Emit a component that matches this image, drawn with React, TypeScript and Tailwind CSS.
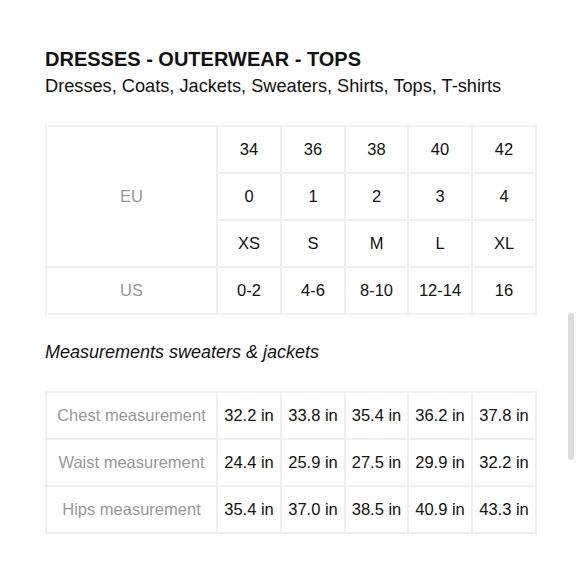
import React from 'react';

const sizes = [
  ['34', '36', '38', '40', '42'],
  ['0', '1', '2', '3', '4'],
  ['XS', 'S', 'M', 'L', 'XL'],
];
const us = ['0-2', '4-6', '8-10', '12-14', '16'];

const measurements: [string, string[]][] = [
  ['Chest measurement', ['32.2 in', '33.8 in', '35.4 in', '36.2 in', '37.8 in']],
  ['Waist measurement', ['24.4 in', '25.9 in', '27.5 in', '29.9 in', '32.2 in']],
  ['Hips measurement', ['35.4 in', '37.0 in', '38.5 in', '40.9 in', '43.3 in']],
];

const cell = 'border-2 border-[#efefef] h-[47px] p-0 text-center align-middle';

const Cols = () => (
  <colgroup>
    <col className="w-[171px]" />
    <col className="w-[64px]" />
    <col className="w-[64px]" />
    <col className="w-[63px]" />
    <col className="w-[64px]" />
    <col className="w-[64px]" />
  </colgroup>
);

export default function App() {
  return (
    <div className="relative w-[580px] h-[580px] bg-white text-[#111] overflow-hidden" style={{ fontFamily: '"Liberation Sans", Arial, sans-serif' }}>
      <div className="pl-[45px] pt-[47px]">
        <h1 className="text-[20px] font-bold leading-[24px]">DRESSES - OUTERWEAR - TOPS</h1>
        <p className="text-[18.2px] leading-[22px] mt-[4px]">Dresses, Coats, Jackets, Sweaters, Shirts, Tops, T-shirts</p>

        <table className="mt-[28px] border-collapse table-fixed w-[490px] text-[16.5px]">
          <Cols />
          <tbody>
            {sizes.map((row, i) => (
              <tr key={i}>
                {i === 0 && (
                  <td rowSpan={3} className={`${cell} text-[#999]`}>EU</td>
                )}
                {row.map((v) => (
                  <td key={v} className={cell}>{v}</td>
                ))}
              </tr>
            ))}
            <tr>
              <td className={`${cell} text-[#999]`}>US</td>
              {us.map((v) => (
                <td key={v} className={cell}>{v}</td>
              ))}
            </tr>
          </tbody>
        </table>

        <h2 className="mt-[26px] text-[18px] italic leading-[22px]">Measurements sweaters &amp; jackets</h2>

        <table className="mt-[28px] border-collapse table-fixed w-[490px] text-[16.5px]">
          <Cols />
          <tbody>
            {measurements.map(([label, vals]) => (
              <tr key={label}>
                <td className={`${cell} text-[#999]`}>{label}</td>
                {vals.map((v, j) => (
                  <td key={j} className={`${cell} whitespace-nowrap`}>{v}</td>
                ))}
              </tr>
            ))}
          </tbody>
        </table>
      </div>

      {/* overlay scrollbar */}
      <div className="absolute left-[568px] top-[313px] w-[6px] h-[147px] rounded-full bg-[#dcdcdc]" />
    </div>
  );
}
